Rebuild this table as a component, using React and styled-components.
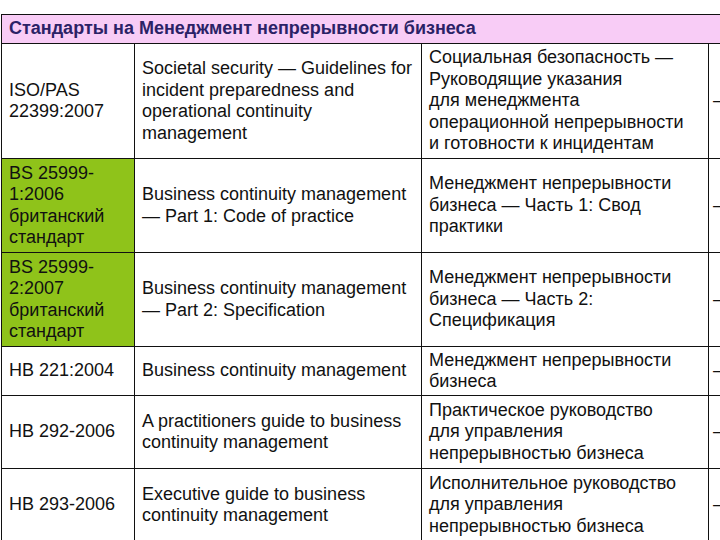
import React from 'react'
import styled, { createGlobalStyle } from 'styled-components'

const GlobalStyle = createGlobalStyle`
  html, body {
    margin: 0;
    padding: 0;
    background: #ffffff;
  }
  body {
    width: 720px;
    height: 540px;
    overflow: hidden;
    font-family: "Liberation Sans", Arial, sans-serif;
  }
`

const Page = styled.div`
  padding-top: 14px;
  width: 720px;
  overflow: hidden;
`

const Table = styled.table`
  border-collapse: collapse;
  table-layout: fixed;
  width: 760px;
  margin-left: 1px;
  color: #111;
  font-size: 18px;
  line-height: 21.5px;
`

const HeaderCell = styled.th`
  background: #f8ccf6;
  color: #2b2266;
  font-weight: bold;
  font-size: 18px;
  text-align: left;
  height: 28px;
  padding: 0 7px;
  border: 1px solid #111;
  white-space: nowrap;
`

const Row = styled.tr`
  height: ${props => props.$h}px;
`

const Cell = styled.td`
  border: 1px solid #111;
  padding: 0 7px;
  vertical-align: middle;
  white-space: nowrap;
  background: ${props => (props.$green ? '#8fc31a' : '#ffffff')};
`

const Dash = styled(Cell)`
  padding-left: 4px;
`

const rows = [
  {
    h: 115,
    code: ['ISO/PAS', '22399:2007'],
    en: ['Societal security — Guidelines for', 'incident preparedness and', 'operational continuity', 'management'],
    ru: ['Социальная безопасность —', 'Руководящие указания', 'для менеджмента', 'операционной непрерывности', 'и готовности к инцидентам'],
  },
  {
    h: 94,
    green: true,
    code: ['BS 25999-', '1:2006', 'британский', 'стандарт'],
    en: ['Business continuity management', '— Part 1: Code of practice'],
    ru: ['Менеджмент непрерывности', 'бизнеса — Часть 1: Свод', 'практики'],
  },
  {
    h: 94,
    green: true,
    code: ['BS 25999-', '2:2007', 'британский', 'стандарт'],
    en: ['Business continuity management', '— Part 2: Specification'],
    ru: ['Менеджмент непрерывности', 'бизнеса — Часть 2:', 'Спецификация'],
  },
  {
    h: 49,
    code: ['HB 221:2004'],
    en: ['Business continuity management'],
    ru: ['Менеджмент непрерывности', 'бизнеса'],
  },
  {
    h: 73,
    code: ['HB 292-2006'],
    en: ['A practitioners guide to business', 'continuity management'],
    ru: ['Практическое руководство', 'для управления', 'непрерывностью бизнеса'],
  },
  {
    h: 73,
    code: ['HB 293-2006'],
    en: ['Executive guide to business', 'continuity management'],
    ru: ['Исполнительное руководство', 'для управления', 'непрерывностью бизнеса'],
  },
]

const Lines = ({ items }) =>
  items.map((line, i) => (
    <React.Fragment key={i}>
      {i > 0 && <br />}
      {line}
    </React.Fragment>
  ))

const App = () => (
  <>
    <GlobalStyle />
    <Page>
      <Table>
        <colgroup>
          <col style={{ width: 133 }} />
          <col style={{ width: 287 }} />
          <col style={{ width: 287 }} />
          <col style={{ width: 53 }} />
        </colgroup>
        <thead>
          <tr>
            <HeaderCell colSpan={4}>Стандарты на Менеджмент непрерывности бизнеса</HeaderCell>
          </tr>
        </thead>
        <tbody>
          {rows.map((r, i) => (
            <Row key={i} $h={r.h}>
              <Cell $green={r.green}>
                <Lines items={r.code} />
              </Cell>
              <Cell>
                <Lines items={r.en} />
              </Cell>
              <Cell>
                <Lines items={r.ru} />
              </Cell>
              <Dash>–</Dash>
            </Row>
          ))}
        </tbody>
      </Table>
    </Page>
  </>
)

export default App
